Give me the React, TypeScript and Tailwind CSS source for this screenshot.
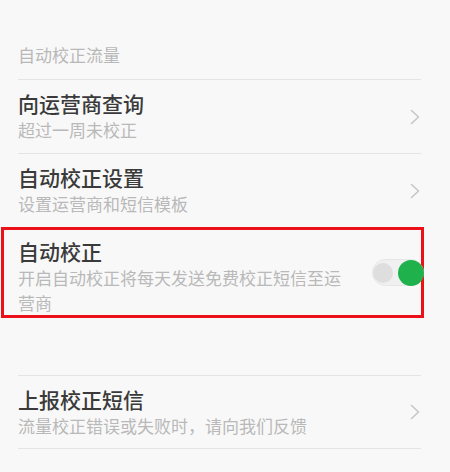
import React from "react";

const Chevron = () => (
  <svg width="10" height="16" viewBox="0 0 10 16" className="mr-[1px] shrink-0">
    <polyline points="1.5,1.5 8.5,8 1.5,14.5" fill="none" stroke="#c6c6c6" strokeWidth="1.6" strokeLinecap="round" strokeLinejoin="round" />
  </svg>
);

const Row = ({ title, sub, last }: { title: string; sub: string; last?: boolean }) => (
  <div className={`h-[74px] border-t border-[#e4e4e4] flex items-center justify-between ${last ? "border-b" : ""}`}>
    <div className="flex flex-col pb-[2px]">
      <div className="text-[21px] leading-[28px] font-medium text-[#3a3a3a]">{title}</div>
      <div className="text-[17px] leading-[25px] text-[#b9b9b9]">{sub}</div>
    </div>
    <Chevron />
  </div>
);

export default function App() {
  return (
    <div className="w-[450px] h-[472px] bg-[#f8f8f8] overflow-hidden font-['Noto_Sans_CJK_SC','Noto_Sans',sans-serif]">
      <div className="pl-[18px] pr-[29px]">
        <div className="h-[79px] flex items-end pb-[12px] text-[17px] leading-[24px] text-[#b8b8b8]">自动校正流量</div>
        <Row title="向运营商查询" sub="超过一周未校正" />
        <Row title="自动校正设置" sub="设置运营商和短信模板" />
        <div className="-ml-[17px] w-[423px] h-[91px] border-[3px] border-[#ec1018] flex items-center justify-between pl-[14px]">
          <div className="flex flex-col self-start pt-[7px] w-[340px]">
            <div className="text-[21px] leading-[28px] font-medium text-[#3a3a3a]">自动校正</div>
            <div className="text-[17px] leading-[25px] text-[#b9b9b9] w-[330px]">开启自动校正将每天发送免费校正短信至运营商</div>
          </div>
          <div className="relative w-[52px] h-[27px] -mr-[3px] rounded-full bg-[#f0f0f0] border border-[#e6e6e6] shrink-0">
            <div className="absolute left-[0px] top-[2.5px] w-[20px] h-[20px] rounded-full bg-[#dedede]" />
            <div className="absolute left-[25px] top-[-0.5px] w-[26px] h-[26px] rounded-full bg-[#1fb14c]" />
          </div>
        </div>
        <div className="h-[57px]" />
        <Row title="上报校正短信" sub="流量校正错误或失败时，请向我们反馈" last />
      </div>
    </div>
  );
}
